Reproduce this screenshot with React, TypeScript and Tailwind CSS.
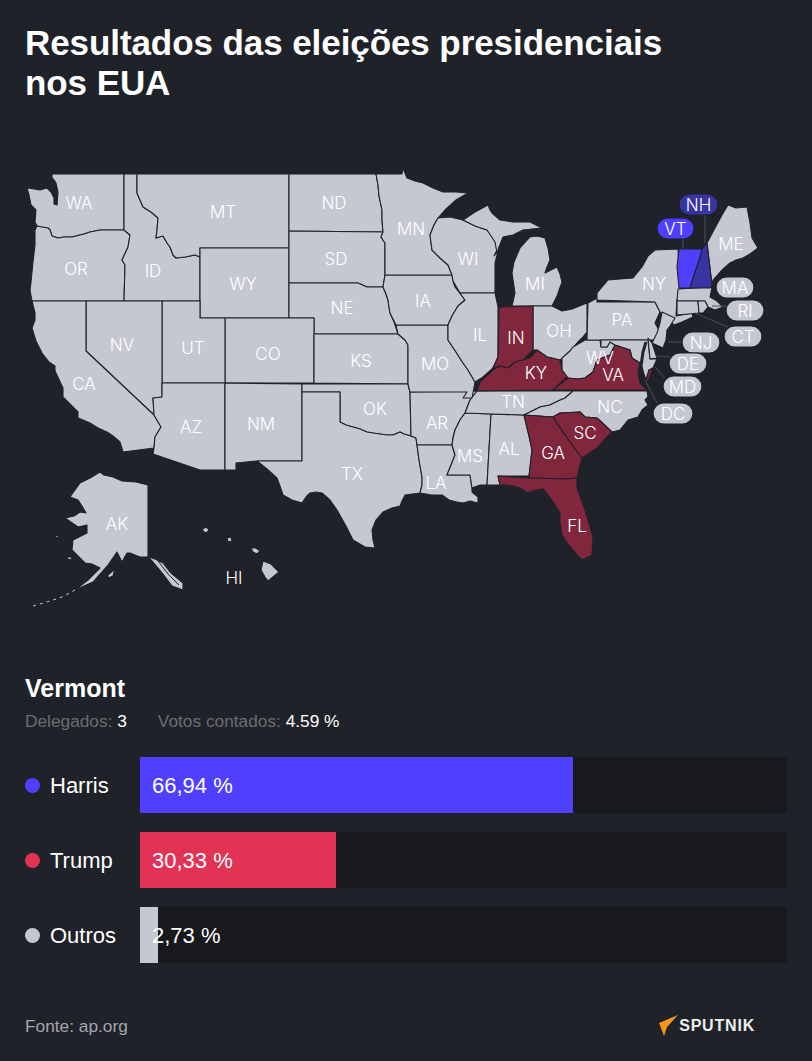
const BG = '#1f2228';
const GREY = '#c5c7d1';
const RED = '#80263d';

const states: { id: string; fill?: string; pts: string }[] = [
  { id: 'WA', pts: '52,174 124,174 124,230 100,230 90,232 84,234 72,237 64,237 58,238 52,236 50,230 48,228 42,227 37,226 35,222 36,210 31,205 29,195 27,188 34,189 40,190 47,188 51,192 54,198 54,204 57,205 58,192 56,183 54,180 52,178' },
  { id: 'OR', pts: '37,226 42,227 48,228 50,230 52,236 58,238 64,237 72,237 84,234 90,232 100,230 124,230 130,235 128,247 122,260 125,265 124,301 32,301 30,290 31,282 33,262 35,245 35,230' },
  { id: 'ID', pts: '124,174 137,174 137,193 143,207 151,212 158,218 157,230 156,238 163,236 167,243 170,247 173,255 176,258 185,257 195,255 200,257 200,301 124,301 125,265 122,260 128,247 130,235 124,230' },
  { id: 'MT', pts: '137,174 289,174 289,248 200,248 200,257 195,255 185,257 176,258 173,255 170,247 167,243 163,236 156,238 157,230 158,218 151,212 143,207 137,193' },
  { id: 'WY', pts: '200,248 289,248 289,318 200,318' },
  { id: 'ND', pts: '289,174 376,174 378,185 379,196 382,210 382,220 383,232 289,231' },
  { id: 'SD', pts: '289,231 383,232 381,237 385,243 385,270 385,275 383,287 376,287 367,287 358,283 289,283' },
  { id: 'NE', pts: '289,283 358,283 367,287 376,287 383,287 386,294 388,300 389,307 390,313 394,322 398,334 314,334 314,318 289,318' },
  { id: 'CO', pts: '225,318 314,318 314,383 225,383' },
  { id: 'KS', pts: '314,334 398,334 405,340 408,345 408,384 314,383' },
  { id: 'UT', pts: '162,301 200,301 200,318 225,318 225,383 162,383' },
  { id: 'NV', pts: '86,301 162,301 162,397 153,398 154,415 86,351' },
  { id: 'CA', pts: '32,301 86,301 86,351 154,415 161,427 155,437 154,448 123,452 120,442 113,436 107,432 98,428 90,423 83,420 78,418 78,412 70,404 63,397 63,388 55,371 55,366 49,362 42,353 36,341 32,328 35,320 35,313' },
  { id: 'AZ', pts: '162,383 225,383 225,470 200,470 153,454 154,448 155,437 161,427 154,415 153,398 162,397' },
  { id: 'NM', pts: '225,383 302,384 302,461 257,461 236,463 236,470 225,470' },
  { id: 'OK', pts: '302,384 408,384 410,392 411,436 404,434 400,432 393,435 387,435 380,434 373,433 367,432 360,429 353,427 346,425 340,422 340,392 302,392' },
  { id: 'TX', pts: '302,392 340,392 340,422 346,425 353,427 360,429 367,432 373,433 380,434 387,435 393,435 400,432 404,434 411,436 416,438 417,445 419,460 422,477 422,485 420,493 405,495 402,501 400,506 392,508 383,512 376,520 372,530 373,540 375,548 365,547 353,540 346,526 337,510 330,500 322,493 316,492 310,493 306,497 302,503 292,500 283,495 280,486 277,478 267,469 257,461 302,461' },
  { id: 'AR', pts: '410,392 477,391 470,400 465,413 460,420 455,430 453,438 452,445 417,445 416,438 411,436' },
  { id: 'LA', pts: '417,445 452,445 455,455 451,465 447,475 470,475 472,488 472,492 478,497 478,503 470,501 463,503 457,502 449,500 442,495 432,495 420,493 422,485 422,477 419,460' },
  { id: 'MS', pts: '465,413 491,414 487,485 480,485 472,488 470,475 447,475 451,465 455,455 452,445 453,438 455,430 460,420' },
  { id: 'AL', pts: '491,414 524,415 529,436 532,450 529,476 498,476 500,485 487,485' },
  { id: 'TN', pts: '477,391 573,391 565,398 558,401 550,405 540,407 524,415 491,414 465,413 470,400' },
  { id: 'NC', pts: '524,415 540,407 550,405 558,401 565,398 573,391 647,391 648,397 645,400 648,405 642,410 638,417 628,420 620,430 612,432 597,418 585,417 580,412 560,413 553,417' },
  { id: 'MO', pts: '396,325 448,325 448,340 456,352 463,363 468,370 475,382 472,398 463,398 467,392 410,392 408,384 408,345 405,340 398,334' },
  { id: 'IA', pts: '385,275 452,275 453,281 455,287 465,300 458,306 452,316 448,325 396,325 390,313 389,307 388,300 386,294 383,287' },
  { id: 'MN', pts: '376,174 402,174 403,168 407,178 415,181 423,183 433,188 443,192 456,192 468,193 456,200 445,210 438,218 434,225 430,235 432,250 440,258 448,265 452,275 385,275 385,243 381,237 383,232 382,220 382,210 379,196 378,185' },
  { id: 'WI', pts: '438,218 450,217 463,220 475,226 487,230 495,240 497,250 494,256 498,251 495,263 495,293 460,293 453,281 452,275 448,265 440,258 432,250 430,235 434,225' },
  { id: 'MI', pts: '463,220 475,212 488,205 490,210 492,213 500,220 513,222 530,222 542,228 532,229 523,230 513,235 503,237 499,247 497,253 495,242 487,230 475,226' },
  { id: 'MI2', pts: '512,306 552,306 557,296 562,282 560,274 557,267 549,271 545,273 547,267 550,260 548,248 545,238 537,236 530,237 520,248 514,262 512,273 515,293' },
  { id: 'IL', pts: '460,293 495,293 498,307 498,357 493,368 483,377 475,382 468,370 463,363 456,352 448,340 448,325 452,316 458,306 465,300 462,296' },
  { id: 'OH', pts: '533,306 552,306 562,311 572,309 587,303 587,332 582,338 577,343 570,351 563,358 560,360 547,357 537,350 533,350' },
  { id: 'WV', pts: '562,358 570,351 573,347 585,340 600,340 601,347 607,347 610,342 615,345 610,355 597,360 593,372 585,378 577,379 568,378 562,370' },
  { id: 'PA', pts: '588,303 597,298 597,302 655,302 660,312 655,323 660,332 655,340 587,340' },
  { id: 'NY', pts: '597,300 597,293 608,280 620,279 633,278 642,267 648,256 655,250 678,249 680,288 677,300 676,316 692,313 693,317 682,322 674,325 670,320 660,312 655,302' },
  { id: 'ME', pts: '707,243 715,228 722,215 728,205 736,208 747,207 750,223 752,238 758,248 750,254 743,258 736,260 730,263 722,270 713,280 712,285' },
  { id: 'MA', pts: '678,289 712,287 710,297 717,301 723,307 715,310 708,307 705,301 677,301' },
  { id: 'CT', pts: '677,301 698,301 699,313 677,315' },
  { id: 'RI', pts: '698,301 705,301 708,307 703,313 699,313' },
  { id: 'NJ', pts: '662,312 675,318 670,326 667,330 666,340 663,348 652,343 657,333 660,323' },
  { id: 'MD', pts: '601,340 648,340 650,359 657,359 653,368 649,370 646,380 640,363 632,358 630,350 615,345 610,342 607,347 601,347' },
  { id: 'DE', pts: '648,338 652,343 657,358 650,359' },
  { id: 'IN', fill: RED, pts: '499,307 533,306 533,350 523,360 515,362 508,368 500,366 493,368 498,357' },
  { id: 'KY', fill: RED, pts: '477,391 480,382 493,370 500,366 508,368 515,362 523,360 530,358 537,350 547,357 560,360 562,370 567,377 553,390' },
  { id: 'VA', fill: RED, pts: '553,390 568,378 577,379 585,378 593,372 597,360 610,355 615,345 630,350 632,358 640,363 638,373 640,383 647,390' },
  { id: 'VA2', fill: RED, pts: '653,368 648,382 646,380 649,370' },
  { id: 'GA', fill: RED, pts: '524,415 553,417 563,432 582,458 577,478 567,479 530,478 529,476 532,450 529,436' },
  { id: 'SC', fill: RED, pts: '553,417 560,413 580,412 585,417 597,418 612,432 604,440 597,448 582,458 563,432' },
  { id: 'FL', fill: RED, pts: '498,476 530,478 567,479 577,478 577,488 585,510 593,537 592,555 582,560 573,550 567,543 562,535 560,523 560,513 552,500 543,489 536,490 528,493 520,488 513,486 506,485 500,485' },
  { id: 'VT', fill: '#4f3fff', pts: '679,249 702,249 700,258 695,272 690,288 679,288 677,267' },
  { id: 'NH', fill: '#3a33a3', pts: '702,249 707,243 712,285 710,288 690,288 695,272 700,258' },
  { id: 'AK', pts: '100,472 104,475 113,477 122,481 136,482 148,485 148,557 140,557 130,553 127,553 122,562 117,552 108,565 100,574 93,582 75,590 88,580 100,568 92,564 85,563 72,550 73,540 87,533 87,525 78,527 65,518 74,516 80,512 86,513 82,506 78,500 70,497 75,490 80,483 90,478' },
  { id: 'AK2', pts: '148,557 155,559 163,563 170,572 183,583 183,590 172,586 163,574 153,562' },
  { id: 'AK3', pts: '108,575 115,569 113,576 108,578' },
  { id: 'AK4', pts: '52,534 58,536 61,539 56,537' },
  { id: 'AK5', pts: '67,557 72,557 71,560 68,559' },
  { id: 'HI1', pts: '202,529 207,527 209,531 205,533' },
  { id: 'HI2', pts: '227,538 231,537 232,541 228,542' },
  { id: 'HI3', pts: '251,548 256,548 260,551 257,554 253,552' },
  { id: 'HI4', pts: '263,561 271,564 279,572 268,581 265,577 261,570' },
];

const aleutians = 'M75 590 L62 597 L50 601 L33 606';

const labels: [string, number, number][] = [
  ['WA', 79, 203], ['MT', 223, 212], ['ND', 334, 203], ['MN', 411, 229], ['WI', 468, 259], ['MI', 535, 284],
  ['NY', 654, 284], ['ME', 731, 244], ['OR', 76, 269], ['ID', 153, 271], ['WY', 243, 284], ['SD', 336, 259],
  ['NE', 342, 308], ['IA', 423, 301], ['IL', 480, 335], ['IN', 516, 338], ['OH', 559, 331], ['PA', 622, 320],
  ['NV', 122, 345], ['UT', 193, 348], ['CO', 268, 354], ['KS', 361, 361], ['MO', 435, 364], ['KY', 536, 373],
  ['WV', 600, 358], ['VA', 613, 375], ['CA', 84, 384], ['AZ', 191, 427], ['NM', 261, 424], ['OK', 375, 409],
  ['AR', 437, 423], ['TN', 513, 402], ['NC', 610, 407], ['SC', 585, 433], ['TX', 352, 474], ['MS', 470, 456],
  ['AL', 509, 449], ['GA', 553, 453], ['LA', 436, 483], ['FL', 577, 526], ['AK', 117, 524], ['HI', 234, 578],
];

const pills: { t: string; x: number; y: number; w: number; fill: string }[] = [
  { t: 'NH', x: 679, y: 194, w: 39, fill: '#3a33a3' },
  { t: 'VT', x: 657, y: 218, w: 37, fill: '#4f3fff' },
  { t: 'MA', x: 716, y: 277, w: 38, fill: GREY },
  { t: 'RI', x: 726, y: 300, w: 38, fill: GREY },
  { t: 'CT', x: 724, y: 326, w: 38, fill: GREY },
  { t: 'NJ', x: 682, y: 332, w: 38, fill: GREY },
  { t: 'DE', x: 669, y: 353, w: 38, fill: GREY },
  { t: 'MD', x: 663, y: 376, w: 39, fill: GREY },
  { t: 'DC', x: 653, y: 403, w: 40, fill: GREY },
];

const leaders = [
  'M683 239V249', 'M705 215V243', 'M712 306H727', 'M695 313L728 327',
  'M668 342H682', 'M657 356L670 357', 'M655 367L665 378', 'M645 380L657 403',
];

const candidates = [
  { name: 'Harris', pct: 66.94, label: '66,94 %', color: '#4f3fff' },
  { name: 'Trump', pct: 30.33, label: '30,33 %', color: '#e23355' },
  { name: 'Outros', pct: 2.73, label: '2,73 %', color: GREY },
];

const UsMap = () => (
  <svg viewBox="0 140 812 480" className="block h-[480px] w-[812px]">
    {states.map((s) => (
      <polygon key={s.id} points={s.pts} fill={s.fill ?? GREY} stroke={BG} strokeWidth={1.1} strokeLinejoin="round" />
    ))}
    <path d={aleutians} fill="none" stroke={GREY} strokeWidth={1} strokeDasharray="3 4" />
    {/* Chesapeake */}
    <path d="M646 342L643 352L641 366L644 380" fill="none" stroke={BG} strokeWidth={3} />
    {/* panhandle channels */}
    <path d="M158 561L168 574L179 585M164 563L174 576" fill="none" stroke={BG} strokeWidth={1} />
    {leaders.map((d) => (
      <path key={d} d={d} fill="none" stroke="#4b4e57" strokeWidth={1} />
    ))}
    {labels.map(([t, x, y]) => (
      <text key={t} x={x} y={y + 6} textAnchor="middle" fill="#fff" fontSize={17} fontWeight={300} fontFamily="Inter, sans-serif">
        {t}
      </text>
    ))}
    {pills.map((p) => (
      <g key={p.t}>
        <rect x={p.x} y={p.y} width={p.w} height={21} rx={10.5} fill={p.fill} stroke={BG} strokeWidth={1.2} />
        <text x={p.x + p.w / 2} y={p.y + 16.5} textAnchor="middle" fill="#fff" fontSize={17} fontWeight={300} fontFamily="Inter, sans-serif">
          {p.t}
        </text>
      </g>
    ))}
  </svg>
);

const App = () => {
  return (
    <div className="h-[1061px] w-[812px] overflow-hidden bg-[#1f2228] font-['Liberation_Sans',Arial,sans-serif] text-white">
      <h1 className="h-[140px] px-[25px] pt-[23px] text-[35px] font-bold leading-[40px] tracking-[-0.08px]">
        Resultados das eleições presidenciais
        <br />
        nos EUA
      </h1>
      <UsMap />
      <div className="mt-[54px] px-[25px] text-[25px] font-bold leading-[28px]">Vermont</div>
      <div className="mt-[9px] flex px-[25px] text-[17.3px] leading-[20px]">
        <span className="text-[#6b6d72]">
          Delegados: <span className="text-white">3</span>
        </span>
        <span className="ml-[31px] text-[#6b6d72]">
          Votos contados: <span className="text-white">4.59 %</span>
        </span>
      </div>
      <div className="mt-[26px] flex flex-col gap-[19px] px-[25px]">
        {candidates.map((c) => (
          <div key={c.name} className="flex h-[56px] items-center">
            <span className="h-[15px] w-[15px] rounded-full" style={{ backgroundColor: c.color }} />
            <span className="ml-[10px] w-[90px] pt-[2px] text-[22px] leading-none">{c.name}</span>
            <div className="relative h-full w-[647px] bg-[#18191c]">
              <div className="h-full" style={{ width: `${c.pct}%`, backgroundColor: c.color }} />
              <span className="absolute left-[12px] top-[1px] text-[22px] leading-[56px]">{c.label}</span>
            </div>
          </div>
        ))}
      </div>
      <div className="mt-[52px] flex items-center justify-between pl-[25px] pr-[57px]">
        <span className="text-[17.3px] leading-[20px] text-[#a4a6ab]">Fonte: ap.org</span>
        <div className="flex items-center">
          <svg viewBox="0 0 20 22" className="h-[22px] w-[20px]">
            <path d="M0 8L19 0L8 12L5 21Z" fill="#f7941d" />
          </svg>
          <span className="text-[16px] font-bold leading-none tracking-[0.8px] text-[#eeeeee]">SPUTNIK</span>
        </div>
      </div>
    </div>
  );
};

export default App;
